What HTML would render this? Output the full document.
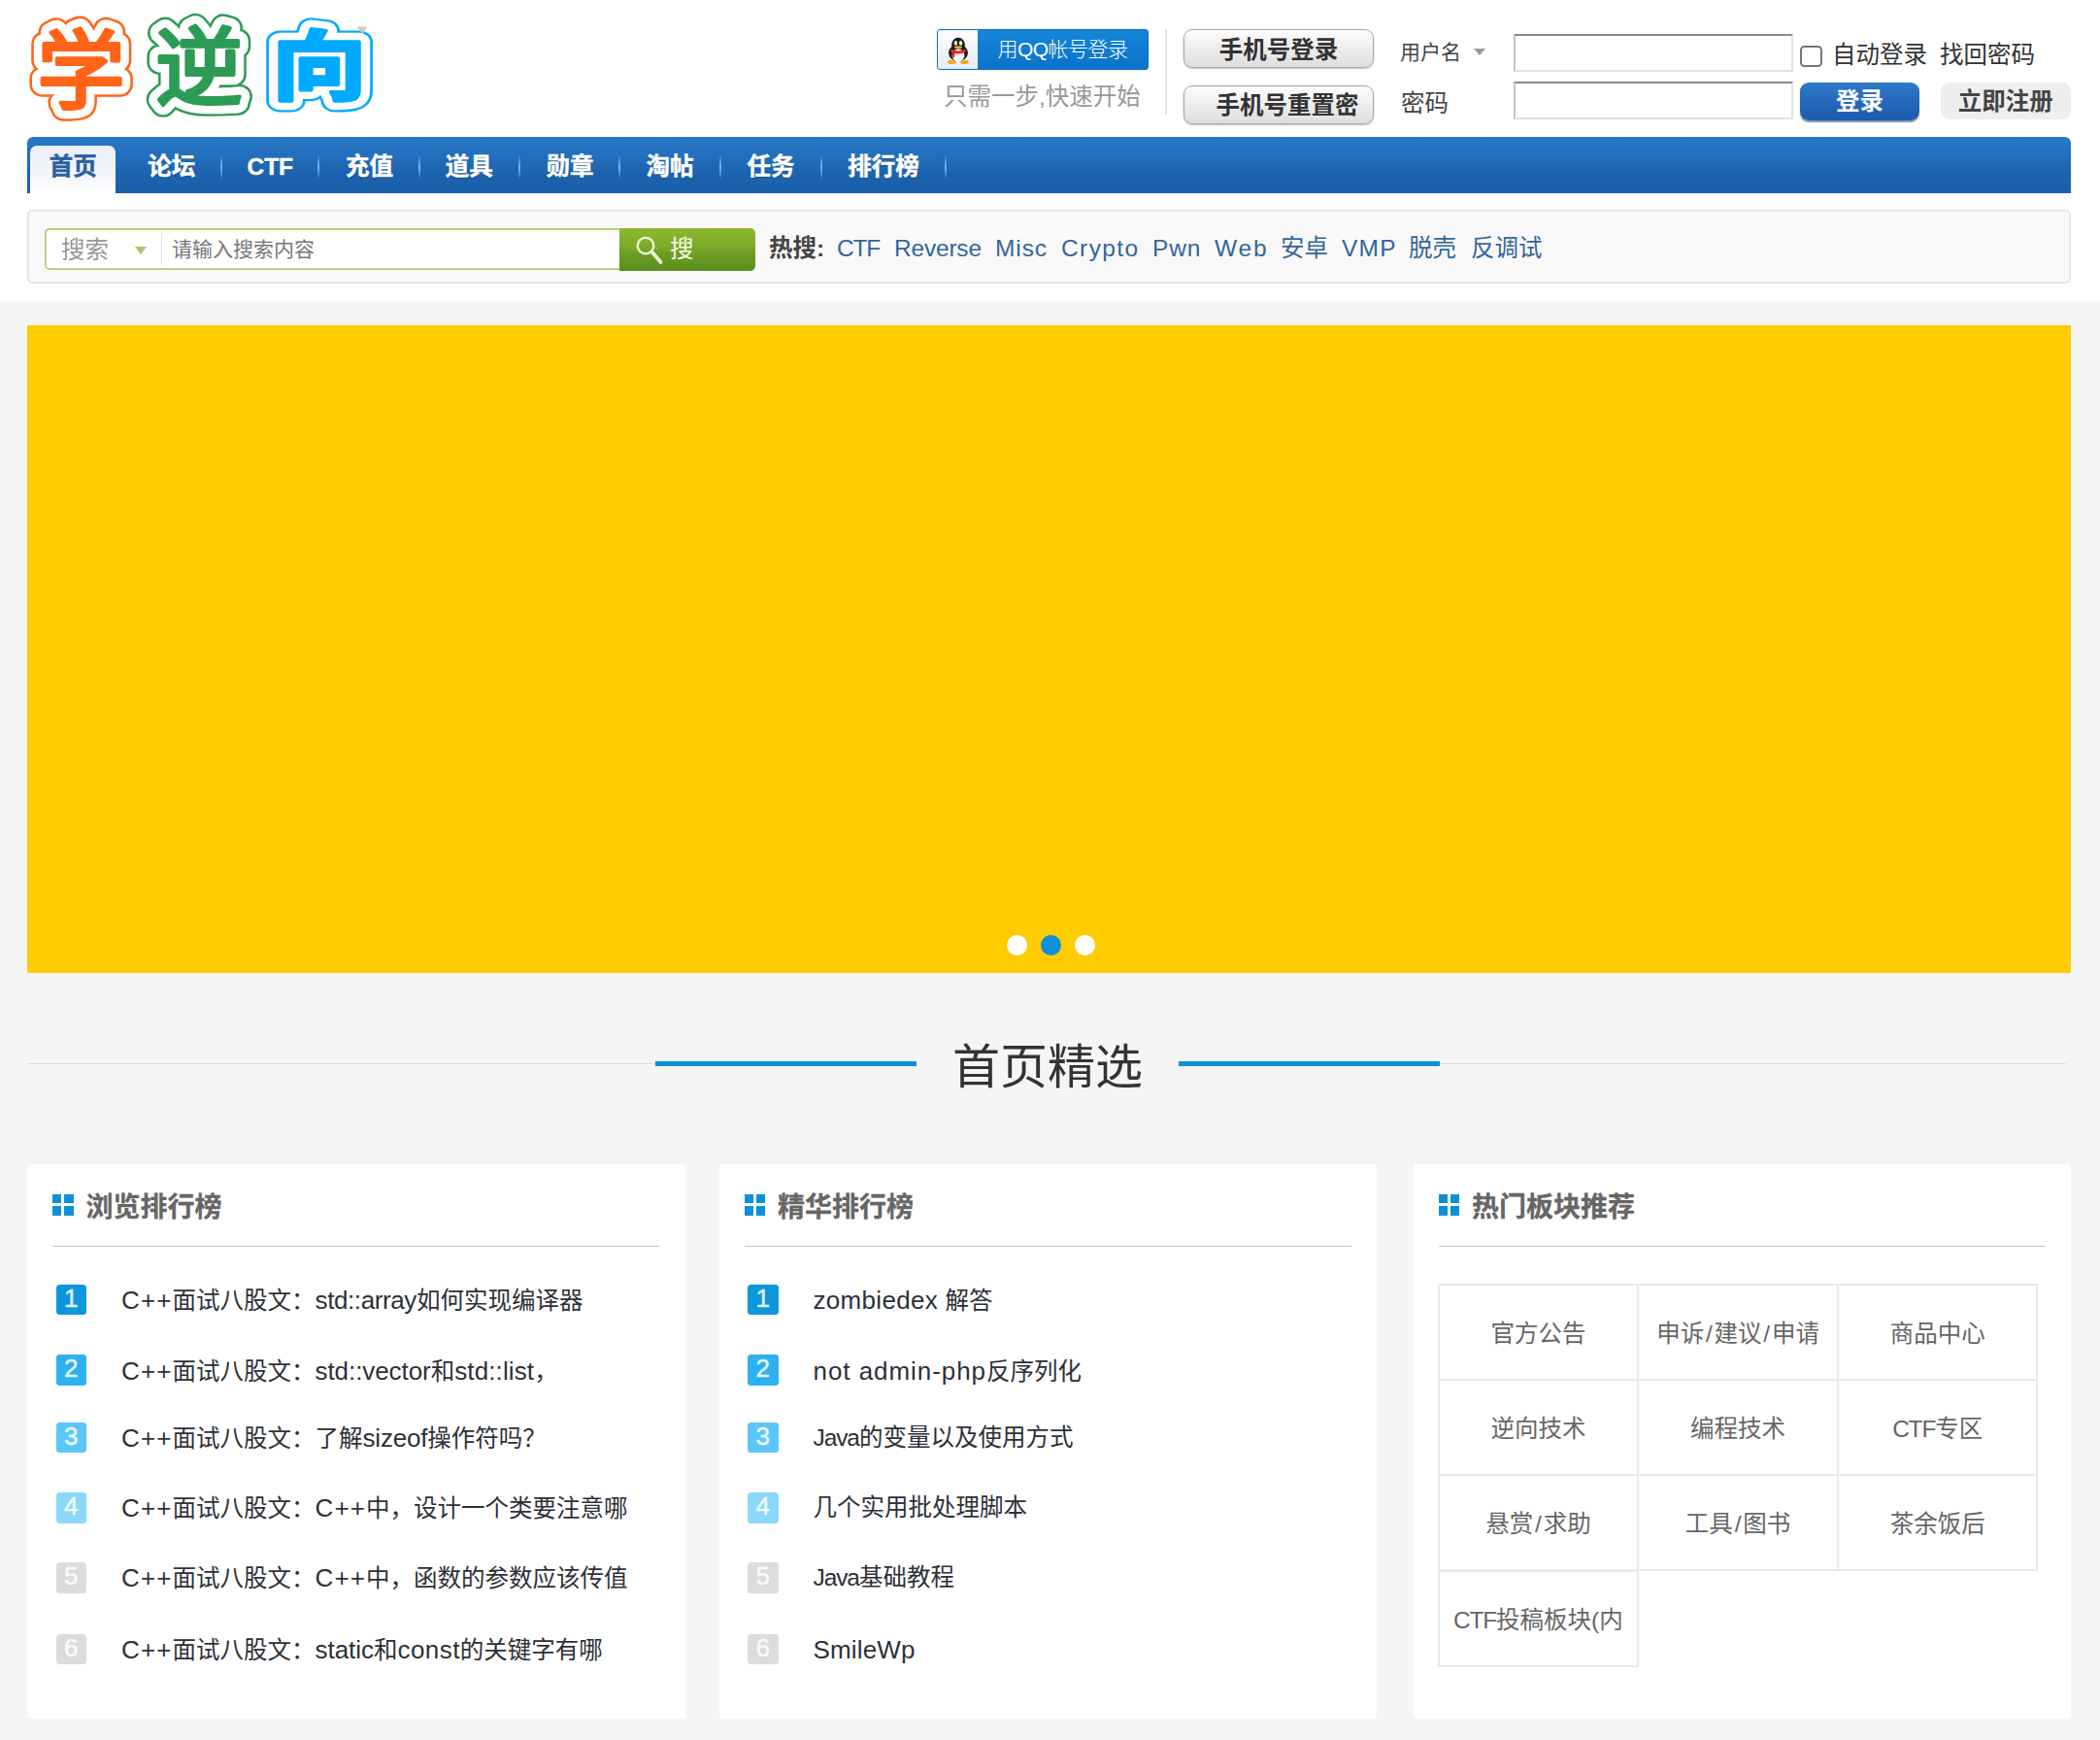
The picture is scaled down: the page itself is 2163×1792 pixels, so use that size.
<!DOCTYPE html>
<html lang="zh-CN">
<head>
<meta charset="utf-8">
<title>学逆向论坛</title>
<style>
*{box-sizing:border-box;margin:0;padding:0}
html,body{width:2163px;height:1792px;overflow:hidden}
body{position:relative;font-family:"Liberation Sans","Noto Sans CJK SC",sans-serif;font-size:24.5px;color:#333;background:#f5f5f5}
a{color:inherit;text-decoration:none}
.abs{position:absolute;white-space:nowrap}
#top{position:absolute;left:0;top:0;width:2163px;height:310px;background:#fff}
/* nav */
#nv{position:absolute;left:28px;top:141px;width:2105px;height:58px;border-radius:6px 6px 0 0;background:linear-gradient(#2878c6 0%,#2270bd 30%,#1c63ae 65%,#1a5ea8 100%)}
#nv .it{-webkit-text-stroke:.45px currentColor;position:absolute;top:3px;height:58px;line-height:56px;font-size:24.5px;font-weight:700;color:#fff;text-align:center;text-shadow:0 1px 1px rgba(0,0,0,.25)}
#nv .sep{position:absolute;top:18px;width:2px;height:26px;background:linear-gradient(rgba(90,160,225,0),rgba(125,190,245,.95) 50%,rgba(90,160,225,0))}
#nv .act{position:absolute;left:3px;top:8.5px;width:88px;height:50px;border-radius:7px 7px 0 0;background:linear-gradient(#e9eff7,#f3f6fb 60%,#fff);}
#nv .it.on{color:#2c5f9e;text-shadow:none}
/* search */
#scbar{position:absolute;left:28px;top:216px;width:2105px;height:76px;box-shadow:inset 0 0 0 1.5px #e0e0e0;border-radius:6px;background:#f9f9f9}
#scin{position:absolute;left:46px;top:235px;width:596px;height:43px;border-radius:5px 0 0 5px;background:#fff;box-shadow:inset 0 0 0 1.75px #aeca76,inset 0 3px 3px rgba(0,0,0,.06)}
#scbtn{position:absolute;left:638px;top:234.5px;width:140px;height:44px;border-radius:0 5px 5px 0;background:linear-gradient(#8db831 0%,#7dac29 42%,#6c9e23 58%,#5b8f1d 100%)}
.hot{position:absolute;top:235.5px;line-height:40px;font-size:24.5px;color:#369;white-space:nowrap}
/* login */
.btn1{position:absolute;left:1219px;width:196px;height:40px;border:1.5px solid #a8a8a8;border-radius:9px;background:linear-gradient(#fdfdfd,#ededed 50%,#dedede);box-shadow:0 1px 2px rgba(0,0,0,.25);font-weight:700;font-size:24.5px;color:#333;line-height:37px;overflow:hidden;white-space:nowrap}
.inp{position:absolute;left:1559px;width:288px;height:39px;background:#fff;border:2px solid #e2e2e2;border-top-color:#8a8a8a;border-left-color:#c4c4c4}
/* banner */
#banner{position:absolute;left:28px;top:335px;width:2105px;height:667px;background:#ffcc00}
.dot{position:absolute;top:963px;width:21px;height:21px;border-radius:50%;background:#fff}
/* panels */
.panel{position:absolute;top:1198.5px;width:677.5px;height:571px;background:#fff;border-radius:4px}
.panel .ico{position:absolute;left:26px;top:31.5px;width:21.5px;height:21.5px}
.panel .ico i{position:absolute;width:9.3px;height:9.3px;background:#0e90d9}
.panel h3{-webkit-text-stroke:.3px currentColor;position:absolute;left:60.5px;top:25.5px;font-size:28px;line-height:40px;font-weight:700;color:#666;white-space:nowrap}
.panel .hr{position:absolute;left:26px;top:84px;width:625.5px;height:1.75px;background:#c9c9c9}
.rk{position:absolute;left:29.5px;width:31.7px;height:31.7px;border-radius:3.5px;color:rgba(255,255,255,.85);font-size:26px;line-height:28.5px;text-align:center;-webkit-text-stroke:.5px currentColor}
.rt{position:absolute;left:97px;font-size:24.5px;line-height:40px;color:#2d3037;white-space:nowrap}
.cell{position:absolute;width:207.5px;height:100px;border:2px solid #e9e9e9;text-align:center;line-height:100px;font-size:24.5px;color:#666;white-space:nowrap;overflow:hidden}
</style>
</head>
<body>
<div id="top"></div>

<!-- logo -->
<svg class="abs" style="left:20px;top:5px" width="380" height="130" viewBox="20 5 380 130">
 <g font-family="'Liberation Sans','Noto Sans CJK SC',sans-serif" font-weight="700" font-size="100" text-anchor="middle" stroke-linejoin="round" stroke-linecap="round">
  <g font-weight="400" fill="#ff6418" transform="translate(83.5 70.5) scale(0.904 0.878) translate(0 38.5)">
   <text vector-effect="non-scaling-stroke" stroke="#ff6418" stroke-width="26">学</text>
   <text vector-effect="non-scaling-stroke" stroke="#fff" stroke-width="21">学</text>
   <text vector-effect="non-scaling-stroke" stroke="#ff6418" stroke-width="4">学</text>
  </g>
  <g font-weight="400" fill="#2c9b55" transform="translate(205.1 68) scale(0.9 0.874) translate(0 38)">
   <text vector-effect="non-scaling-stroke" stroke="#2c9b55" stroke-width="26">逆</text>
   <text vector-effect="non-scaling-stroke" stroke="#fff" stroke-width="21">逆</text>
   <text vector-effect="non-scaling-stroke" stroke="#2c9b55" stroke-width="4">逆</text>
  </g>
  <g fill="#00aaff" transform="translate(329 67.4) scale(0.974 0.781) translate(0 38)">
   <text vector-effect="non-scaling-stroke" stroke="#00aaff" stroke-width="26">向</text>
   <text vector-effect="non-scaling-stroke" stroke="#fff" stroke-width="21">向</text>
   <text vector-effect="non-scaling-stroke" stroke="#00aaff" stroke-width="4">向</text>
  </g>
 </g>
 <path d="M367.6 27.4 L378 27.4 L373.5 35.6 Z" fill="#c9c9c9"/>
</svg>

<!-- QQ login -->
<div class="abs" style="left:965px;top:30px;width:218px;height:42px;border-radius:3px;background:linear-gradient(#1585d8,#0b73c9);border:1.5px solid #0a6dc0;overflow:hidden">
  <div class="abs" style="left:0;top:0;width:41px;height:40px;background:linear-gradient(#fdfdfd,#e6edf4)"></div>
  <svg class="abs" style="left:6.5px;top:5.5px" width="28" height="29.5" viewBox="0 0 32 34">
    <ellipse cx="16" cy="20" rx="11.5" ry="10" fill="#1a1a1a"/>
    <ellipse cx="16" cy="10.5" rx="8" ry="8.5" fill="#1a1a1a"/>
    <ellipse cx="16" cy="23" rx="7.5" ry="7.5" fill="#fff"/>
    <ellipse cx="8.5" cy="31" rx="5" ry="2.4" fill="#f5a51c"/>
    <ellipse cx="23.5" cy="31" rx="5" ry="2.4" fill="#f5a51c"/>
    <path d="M7.5 15.5 Q16 20 24.5 15.5 L25 19 Q16 23.5 7 19 Z" fill="#e6251f"/>
    <path d="M9 19 L12 19.8 L11.5 26 L8.5 25 Z" fill="#e6251f"/>
    <ellipse cx="13" cy="8.5" rx="1.9" ry="2.6" fill="#fff"/>
    <ellipse cx="19" cy="8.5" rx="1.9" ry="2.6" fill="#fff"/>
    <ellipse cx="16" cy="13.6" rx="4.6" ry="1.7" fill="#f5a51c"/>
  </svg>
  <div class="abs" style="left:41px;top:0;width:175px;height:40px;line-height:39px;text-align:center;color:#fff;font-size:21px;font-weight:300;letter-spacing:-0.5px">用QQ帐号登录</div>
</div>
<div class="abs" style="left:972px;top:80px;line-height:40px;font-size:24.5px;color:#999;font-weight:400">只需一步,快速开始</div>
<div class="abs" style="left:1200px;top:30px;width:1.75px;height:88px;background:#e4e4e4"></div>

<div class="btn1" style="top:30px;text-align:center;line-height:42px">手机号登录</div>
<div class="btn1" style="top:87.5px;padding-left:32.5px;line-height:39px">手机号重置密</div>

<div class="abs" style="left:1442px;top:36px;line-height:36px;font-size:21px;color:#444">用户名</div>
<div class="abs" style="left:1517.5px;top:50px;width:0;height:0;border:6.5px solid transparent;border-top:7.5px solid #999;border-bottom:0"></div>
<div class="abs" style="left:1443px;top:87.25px;line-height:40px;font-size:24.5px;color:#444">密码</div>
<div class="inp" style="top:35px"></div>
<div class="inp" style="top:84px"></div>
<div class="abs" style="left:1854px;top:46.5px;width:22.5px;height:22px;border:2px solid #767676;border-radius:4.5px;background:#fff"></div>
<div class="abs" style="left:1887px;top:36.5px;line-height:40px;font-size:24.5px;color:#333">自动登录</div>
<div class="abs" style="left:1998px;top:36.5px;line-height:40px;font-size:24.5px;color:#333">找回密码</div>
<div class="abs" style="left:1854px;top:84.5px;width:123px;height:39.5px;border-radius:9px;background:linear-gradient(#2f7acb,#2468bc 50%,#1d5aab);box-shadow:0 1.5px 1px rgba(20,60,120,.55);color:#fff;font-weight:700;font-size:24.5px;line-height:40.5px;text-align:center">登录</div>
<div class="abs" style="left:1998.5px;top:84.5px;width:134.5px;height:38.5px;border-radius:9px;background:#eee;color:#444;font-weight:700;font-size:24.5px;line-height:39px;text-align:center">立即注册</div>
<!-- nav -->
<div id="nv">
 <div class="act"></div>
 <a class="it on" style="left:-12.75px;width:120px">首页</a>
 <a class="it" style="left:88.75px;width:120px">论坛</a>
 <a class="it" style="left:190.25px;width:120px">CTF</a>
 <a class="it" style="left:292.50px;width:120px">充值</a>
 <a class="it" style="left:395.25px;width:120px">道具</a>
 <a class="it" style="left:499.00px;width:120px">勋章</a>
 <a class="it" style="left:602.00px;width:120px">淘帖</a>
 <a class="it" style="left:706.00px;width:120px">任务</a>
 <a class="it" style="left:822.00px;width:120px">排行榜</a>
 <i class="sep" style="left:199.0px"></i>
 <i class="sep" style="left:299.0px"></i>
 <i class="sep" style="left:403.0px"></i>
 <i class="sep" style="left:506.0px"></i>
 <i class="sep" style="left:609.4px"></i>
 <i class="sep" style="left:713.3px"></i>
 <i class="sep" style="left:817.2px"></i>
 <i class="sep" style="left:944.7px"></i>
</div>

<!-- search -->
<div id="scbar"></div>
<div id="scin"></div>
<div class="abs" style="left:63px;top:238px;line-height:40px;font-size:24.5px;color:#999;font-weight:400">搜索</div>
<div class="abs" style="left:139px;top:254px;width:0;height:0;border:6.5px solid transparent;border-top:8px solid #a9c46c;border-bottom:0"></div>
<div class="abs" style="left:165.5px;top:240px;width:1.75px;height:33px;background:#e2e2e2"></div>
<div class="abs" style="left:177px;top:237px;line-height:40px;font-size:21px;color:#777;font-weight:400">请输入搜索内容</div>
<div id="scbtn">
 <svg class="abs" style="left:15px;top:6px" width="32" height="32" viewBox="0 0 32 32"><circle cx="12" cy="12" r="8.3" fill="none" stroke="#e9f3d3" stroke-width="2.4"/><path d="M18.5 18.5 L27.5 29" stroke="#e9f3d3" stroke-width="3.8" stroke-linecap="round"/></svg>
 <div class="abs" style="left:52px;top:0;line-height:44px;font-size:24.5px;color:#f4f9e8">搜</div>
</div>
<div class="hot" style="left:792px;color:#444;font-weight:700">热搜:</div>
<a class="hot" style="left:862px;letter-spacing:-1.2px">CTF</a>
<a class="hot" style="left:921px;letter-spacing:-0.2px">Reverse</a>
<a class="hot" style="left:1025px;letter-spacing:0.9px">Misc</a>
<a class="hot" style="left:1093px;letter-spacing:1.4px">Crypto</a>
<a class="hot" style="left:1187px;letter-spacing:0.8px">Pwn</a>
<a class="hot" style="left:1251px;letter-spacing:1.8px">Web</a>
<a class="hot" style="left:1319px">安卓</a>
<a class="hot" style="left:1382px;letter-spacing:1.2px">VMP</a>
<a class="hot" style="left:1451px">脱壳</a>
<a class="hot" style="left:1515px">反调试</a>

<!-- banner -->
<div id="banner"></div>
<div class="dot" style="left:1037px"></div>
<div class="dot" style="left:1072px;background:#0e90d9"></div>
<div class="dot" style="left:1107px"></div>

<!-- section title -->
<div class="abs" style="left:28px;top:1094.5px;width:2100px;height:1.5px;background:#dcdcdc"></div>
<div class="abs" style="left:675px;top:1093px;width:269px;height:5.25px;background:#0e90d9"></div>
<div class="abs" style="left:1214px;top:1093px;width:269px;height:5.25px;background:#0e90d9"></div>
<div class="abs" style="left:944px;top:1063px;width:270px;height:72px;background:#f5f5f5;text-align:center;font-size:49px;line-height:72px;color:#333;font-weight:400">首页精选</div>
<!-- panels -->
<div class="panel" style="left:28px">
 <div class="ico"><i style="left:0;top:0"></i><i style="right:0;top:0"></i><i style="left:0;bottom:0"></i><i style="right:0;bottom:0"></i></div>
 <h3>浏览排行榜</h3>
 <div class="hr"></div>
 <div class="rk" style="top:124.30px;background:#0e96db">1</div><a class="rt" style="top:120.60px"><span style="font-size:26px;letter-spacing:1.12px">C++</span>面试八股文：<span style="font-size:26px;letter-spacing:-0.39px">std::array</span>如何实现编译器</a>
 <div class="rk" style="top:196.70px;background:#2eb1f0">2</div><a class="rt" style="top:193.00px"><span style="font-size:26px;letter-spacing:1.12px">C++</span>面试八股文：<span style="font-size:26px;letter-spacing:-0.07px">std::vector</span>和<span style="font-size:26px;letter-spacing:0.12px">std::list</span>，</a>
 <div class="rk" style="top:266.30px;background:#5cc6f7">3</div><a class="rt" style="top:262.60px"><span style="font-size:26px;letter-spacing:1.12px">C++</span>面试八股文：了解<span style="font-size:26px;letter-spacing:-0.2px">sizeof</span>操作符吗？</a>
 <div class="rk" style="top:338.40px;background:#8bd8fb">4</div><a class="rt" style="top:334.70px"><span style="font-size:26px;letter-spacing:1.12px">C++</span>面试八股文：<span style="font-size:26px;letter-spacing:1.12px">C++</span>中，设计一个类要注意哪</a>
 <div class="rk" style="top:410.50px;background:#dcdcdc">5</div><a class="rt" style="top:406.80px"><span style="font-size:26px;letter-spacing:1.12px">C++</span>面试八股文：<span style="font-size:26px;letter-spacing:1.12px">C++</span>中，函数的参数应该传值</a>
 <div class="rk" style="top:484.10px;background:#dcdcdc">6</div><a class="rt" style="top:480.40px"><span style="font-size:26px;letter-spacing:1.12px">C++</span>面试八股文：<span style="font-size:26px;letter-spacing:-0.03px">static</span>和<span style="font-size:26px;letter-spacing:0.43px">const</span>的关键字有哪</a>
</div>
<div class="panel" style="left:740.5px">
 <div class="ico"><i style="left:0;top:0"></i><i style="right:0;top:0"></i><i style="left:0;bottom:0"></i><i style="right:0;bottom:0"></i></div>
 <h3>精华排行榜</h3>
 <div class="hr"></div>
 <div class="rk" style="top:124.30px;background:#0e96db">1</div><a class="rt" style="top:120.60px"><span style="font-size:26px;letter-spacing:0.31px">zombiedex </span>解答</a>
 <div class="rk" style="top:196.70px;background:#2eb1f0">2</div><a class="rt" style="top:193.00px"><span style="font-size:26px;letter-spacing:0.94px">not admin-php</span>反序列化</a>
 <div class="rk" style="top:266.30px;background:#5cc6f7">3</div><a class="rt" style="top:262.60px"><span style="letter-spacing:-1.09px">Java</span>的变量以及使用方式</a>
 <div class="rk" style="top:338.40px;background:#8bd8fb">4</div><a class="rt" style="top:334.70px">几个实用批处理脚本</a>
 <div class="rk" style="top:410.50px;background:#dcdcdc">5</div><a class="rt" style="top:406.80px"><span style="letter-spacing:-1.09px">Java</span>基础教程</a>
 <div class="rk" style="top:484.10px;background:#dcdcdc">6</div><a class="rt" style="top:480.40px"><span style="font-size:26px;letter-spacing:0.17px">SmileWp</span></a>
</div>
<div class="panel" style="left:1455.5px">
 <div class="ico"><i style="left:0;top:0"></i><i style="right:0;top:0"></i><i style="left:0;bottom:0"></i><i style="right:0;bottom:0"></i></div>
 <h3>热门板块推荐</h3>
 <div class="hr"></div>
 <a class="cell" style="left:25.2px;top:123.5px">官方公告</a>
 <a class="cell" style="left:230.8px;top:123.5px">申诉<span style="padding:0 1.8px">/</span>建议<span style="padding:0 1.8px">/</span>申请</a>
 <a class="cell" style="left:436.4px;top:123.5px">商品中心</a>
 <a class="cell" style="left:25.2px;top:221.7px">逆向技术</a>
 <a class="cell" style="left:230.8px;top:221.7px">编程技术</a>
 <a class="cell" style="left:436.4px;top:221.7px"><span style="letter-spacing:-1.2px">CTF</span>专区</a>
 <a class="cell" style="left:25.2px;top:319.9px">悬赏<span style="padding:0 1.8px">/</span>求助</a>
 <a class="cell" style="left:230.8px;top:319.9px">工具<span style="padding:0 1.8px">/</span>图书</a>
 <a class="cell" style="left:436.4px;top:319.9px">茶余饭后</a>
 <a class="cell" style="left:25.2px;top:418.1px"><span style="letter-spacing:-1.2px">CTF</span>投稿板块(内</a>
</div>
</body>
</html>
